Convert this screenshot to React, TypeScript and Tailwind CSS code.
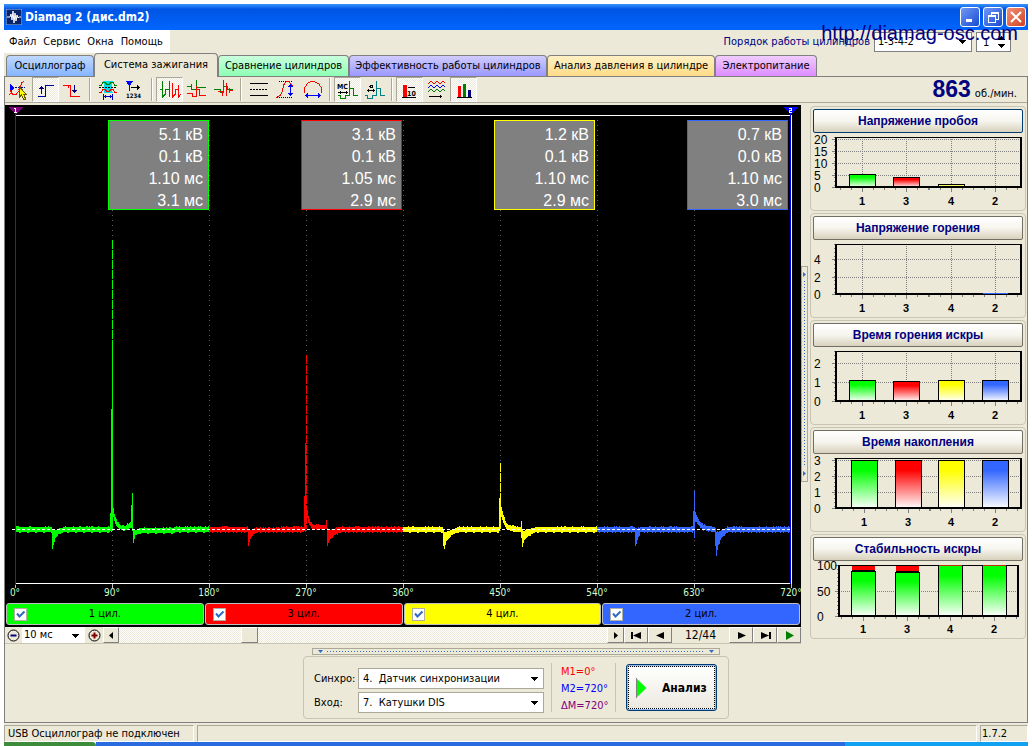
import React, { useState } from 'react';
import clsx from 'clsx';

type Column = [x: number, top: number, bottom: number];

interface Channel {
  id: number;
  from: number;
  to: number;
  color: string;
  bar: string;
  box: string;
  readout: string[];
  columns: Column[];
}

interface MiniBar {
  x: number;
  y: number;
  w: number;
  fill: string;
}

interface MiniMark extends MiniBar {
  h: number;
}

interface MiniChartData {
  title: string;
  active?: boolean;
  left: number;
  right: number;
  top: number;
  bottom: number;
  centers: number[];
  ticks: [label: string, y: number][];
  bars: MiniBar[];
  marks?: MiniMark[];
}

const ZERO = 424;

// Columns are scope pixels: x, highest point, lowest point
const channels: Channel[] = [
  {
    id: 1,
    from: 11,
    to: 204,
    color: '#00ff00',
    bar: 'bg-[#00ff00]',
    box: 'border-[#00ff00]',
    readout: ['5.1 кВ', '0.1 кВ', '1.10 мс', '3.1 мс'],
    columns: [
      [46, 422, 427], [47, 424, 443], [48, 425, 440], [50, 425, 433], [54, 423, 428], [60, 422, 427],
      [104, 422, 427], [105, 408, 426], [106, 304, 427], [107, 240, 426], [108, 403, 412], [109, 410, 416],
      [112, 417, 422], [116, 421, 425], [120, 421, 425], [125, 417, 423], [126, 400, 422], [127, 389, 425],
      [128, 424, 438], [130, 425, 430], [134, 423, 428],
    ],
  },
  {
    id: 3,
    from: 204,
    to: 398,
    color: '#ff0000',
    bar: 'bg-[#ff0000]',
    box: 'border-[#ff0000]',
    readout: ['3.1 кВ', '0.1 кВ', '1.05 мс', '2.9 мс'],
    columns: [
      [242, 422, 427], [243, 424, 441], [244, 425, 436], [247, 425, 430], [252, 423, 427],
      [298, 422, 427], [299, 392, 426], [300, 339, 426], [301, 406, 413], [302, 406, 413], [304, 415, 420],
      [307, 420, 424], [310, 420, 424], [320, 420, 424], [321, 415, 424], [322, 424, 441], [324, 425, 435],
      [328, 424, 431], [335, 422, 427],
    ],
  },
  {
    id: 4,
    from: 398,
    to: 592,
    color: '#ffff00',
    bar: 'bg-[#ffff00]',
    box: 'border-[#ffff00]',
    readout: ['1.2 кВ', '0.1 кВ', '1.10 мс', '2.9 мс'],
    columns: [
      [437, 422, 427], [438, 424, 441], [439, 427, 444], [441, 427, 436], [446, 425, 430], [452, 422, 427],
      [493, 422, 427], [494, 393, 426], [495, 393, 420], [496, 403, 412], [498, 411, 418], [501, 418, 423],
      [505, 421, 426], [515, 422, 427], [516, 417, 432], [517, 425, 441], [519, 426, 435], [524, 424, 430],
      [531, 422, 427],
    ],
  },
  {
    id: 2,
    from: 592,
    to: 785,
    color: '#3366ff',
    bar: 'bg-[#3366ff]',
    box: 'border-[#3366ff]',
    readout: ['0.7 кВ', '0.0 кВ', '1.10 мс', '3.0 мс'],
    columns: [
      [629, 422, 427], [630, 424, 441], [632, 424, 435], [635, 422, 427],
      [687, 422, 427], [688, 407, 426], [689, 407, 433], [690, 408, 416], [693, 415, 420], [698, 420, 425],
      [709, 422, 427], [710, 424, 441], [711, 427, 450], [713, 427, 440], [716, 425, 433], [722, 422, 427],
    ],
  },
];

const spikes = [
  { x: 107, y: 135, color: '#00ff00' },
  { x: 301, y: 250, color: '#ff0000' },
  { x: 495, y: 358, color: '#ffff00' },
  { x: 689, y: 386, color: '#3366ff' },
];

const degrees = [0, 90, 180, 270, 360, 450, 540, 630, 720];

const miniCharts: MiniChartData[] = [
  {
    title: 'Напряжение пробоя',
    active: true,
    left: 25, right: 210, top: 4, bottom: 54,
    centers: [51, 95, 140, 184],
    ticks: [['20', 6], ['15', 18], ['10', 30], ['5', 42], ['0', 54]],
    bars: [
      { x: 38, y: 41, w: 26, fill: 'green' },
      { x: 82, y: 44, w: 26, fill: 'red' },
      { x: 127, y: 51, w: 26, fill: 'yellow' },
    ],
    marks: [{ x: 128, y: 52, w: 25, h: 1, fill: '#ffff66' }],
  },
  {
    title: 'Напряжение горения',
    left: 25, right: 210, top: 4, bottom: 54,
    centers: [51, 95, 140, 184],
    ticks: [['4', 19], ['2', 37], ['0', 54]],
    bars: [],
    marks: [{ x: 172, y: 53, w: 25, h: 1, fill: '#3366ff' }],
  },
  {
    title: 'Время горения искры',
    left: 25, right: 210, top: 4, bottom: 54,
    centers: [51, 95, 140, 184],
    ticks: [['2', 16], ['1', 35], ['0', 54]],
    bars: [
      { x: 38, y: 33, w: 26, fill: 'green' },
      { x: 82, y: 34, w: 26, fill: 'red' },
      { x: 127, y: 33, w: 26, fill: 'yellow' },
      { x: 171, y: 33, w: 26, fill: 'blue' },
    ],
  },
  {
    title: 'Время накопления',
    left: 25, right: 210, top: 4, bottom: 54,
    centers: [53, 97, 140, 184],
    ticks: [['3', 6], ['2', 22], ['1', 38], ['0', 54]],
    bars: [
      { x: 40, y: 6, w: 26, fill: 'green' },
      { x: 84, y: 6, w: 26, fill: 'red' },
      { x: 127, y: 6, w: 26, fill: 'yellow' },
      { x: 171, y: 6, w: 26, fill: 'blue' },
    ],
  },
  {
    title: 'Стабильность искры',
    left: 28, right: 207, top: 4, bottom: 55,
    centers: [52, 96, 139, 183],
    ticks: [['100', 4], ['50', 30], ['0', 55]],
    bars: [
      { x: 40, y: 10, w: 24, fill: 'green' },
      { x: 84, y: 11, w: 24, fill: 'green' },
      { x: 127, y: 4, w: 24, fill: 'green' },
      { x: 171, y: 4, w: 24, fill: 'green' },
    ],
    marks: [
      { x: 41, y: 5, w: 23, h: 4, fill: '#ff0000' },
      { x: 41, y: 9, w: 23, h: 2, fill: '#000' },
      { x: 85, y: 5, w: 23, h: 5, fill: '#ff0000' },
      { x: 85, y: 10, w: 23, h: 2, fill: '#000' },
      { x: 128, y: 4, w: 23, h: 1, fill: '#c03000' },
      { x: 172, y: 4, w: 23, h: 1, fill: '#c03000' },
    ],
  },
];

const tabs = [
  { label: 'Осциллограф', style: 'w-[88px] from-[#c0d8ff] to-[#86b4ff]' },
  { label: 'Система зажигания', style: 'w-[124px]' },
  { label: 'Сравнение цилиндров', style: 'w-[131px] from-[#c8ffdc] to-[#8cffb4]' },
  { label: 'Эффективность работы цилиндров', style: 'w-[198px] from-[#d0ccff] to-[#9c98ff]' },
  { label: 'Анализ давления в цилиндре', style: 'w-[168px] from-[#fff0c4] to-[#ffdc86]' },
  { label: 'Электропитание', style: 'w-[102px] from-[#f0ccff] to-[#dc8cff]' },
];

function tracePath(channel: Channel): string {
  const cols: Column[] = [[channel.from, 422, 427], ...channel.columns, [channel.to, 422, 427]];
  let seed = channel.id * 97;
  let d = '';
  let k = 0;
  for (let x = channel.from; x < channel.to; x++) {
    while (k < cols.length - 2 && cols[k + 1][0] <= x) k++;
    const [x0, t0, b0] = cols[k];
    const [x1, t1, b1] = cols[k + 1];
    const f = (x - x0) / (x1 - x0);
    seed = (seed * 1103 + 12345) % 65536;
    const up = seed % 5 === 0 ? 1 : 0;
    const down = (seed >> 4) % 4 === 0 ? 1 : 0;
    d += `M${x + 0.5} ${Math.round(t0 + (t1 - t0) * f) - up}V${Math.round(b0 + (b1 - b0) * f) + down}`;
  }
  return d;
}

function Scope() {
  return (
    <div className="relative flex-1 min-h-[400px] bg-black">
      <svg
        className="block w-full h-full absolute inset-0"
        viewBox="0 0 796 497"
        preserveAspectRatio="none"
        shapeRendering="crispEdges"
        role="img"
        aria-label="Осциллограмма зажигания"
      >
        {degrees.slice(1, 8).map((deg, i) => (
          <path
            key={deg}
            d={`M${Math.round(10.5 + (i + 1) * 96.97)}.5 15V478`}
            stroke="#606060"
            strokeDasharray="1 4"
          />
        ))}
        <path d="M11 10.5H786M11 478.5H787" stroke="#fff" />
        {degrees.map((deg, i) => (
          <path key={deg} d={`M${Math.round(10 + i * 97)}.5 479V483`} stroke="#c0c0c0" />
        ))}
        {channels.map((ch) => (
          <path key={ch.id} d={tracePath(ch)} stroke={ch.color} />
        ))}
        {spikes.map((s) => (
          <path key={s.x} d={`M${s.x}.5 ${s.y}V${ZERO}`} stroke={s.color} strokeDasharray="9 1" />
        ))}
        <path d="M7 424.5H786" stroke="#fff" strokeDasharray="3 2" />
        <path d="M10.5 8V480" stroke="#800080" />
        <path d="M3 2H18L11 9H10Z" fill="#800080" />
        <path d="M785.5 8V479" stroke="#0000ff" />
        <path d="M786.5 10V479" stroke="#fff" />
        <path d="M778 2H793L786 9H785Z" fill="#0000ff" />
        <path d="M9 3.5H11M10.5 3V7M9 7.5H12M784 3.5H787M786.5 3V5M787 5.5H784M784.5 5V8M784 7.5H787" stroke="#fff" fill="none" />
        {degrees.map((deg, i) => (
          <text
            key={deg}
            x={10 + i * 97}
            y={491}
            fill="#ccffcc"
            textAnchor="middle"
            className="text-[10px]"
          >
            {deg}°
          </text>
        ))}
      </svg>
      <div className="relative grid grid-cols-4 pl-[11px] pr-[13px] pt-[15px]">
        {channels.map((ch) => (
          <div key={ch.id} className="flex justify-end">
            <div
              className={clsx(
                'w-[101px] h-[90px] pr-[5px] pt-[3px] bg-[#808080] border text-right text-white font-[Liberation_Sans,sans-serif] text-[16px] leading-[22px]',
                ch.box,
              )}
            >
              {ch.readout.map((line, i) => (
                <p key={i}>{line}</p>
              ))}
            </div>
          </div>
        ))}
      </div>
    </div>
  );
}

function ChannelBar() {
  const [enabled, setEnabled] = useState<Record<number, boolean>>({ 1: true, 2: true, 3: true, 4: true });

  return (
    <div className="grid grid-cols-4 gap-px px-px pt-px pb-[2px] bg-black">
      {channels.map((ch) => (
        <label
          key={ch.id}
          className={clsx('relative flex items-center justify-center h-[22px] rounded-[3px] border border-[#c0c0c0]', ch.bar)}
        >
          <input
            type="checkbox"
            checked={enabled[ch.id]}
            onChange={(e) => setEnabled({ ...enabled, [ch.id]: e.target.checked })}
            className="peer appearance-none absolute left-[7px] size-[13px] bg-white border border-[#b0b0a0]"
          />
          <svg
            className="absolute left-[7px] size-[13px] hidden peer-checked:block pointer-events-none"
            viewBox="0 0 13 13"
            fill="none"
            stroke="#3169c6"
            strokeWidth="2"
          >
            <path d="M3 5.5L5.5 8.5L10.5 3.5" />
          </svg>
          {ch.id} цил.
        </label>
      ))}
    </div>
  );
}

const raised = 'border border-t-white border-l-white border-r-[#808080] border-b-[#808080] bg-[#ece9d8]';

function StepButton({ label, path, color = '#000' }: { label: string; path: string; color?: string }) {
  return (
    <button aria-label={label} className={clsx('w-6 h-4 flex items-center justify-center', raised)}>
      <svg width="15" height="9" viewBox="0 0 15 9" fill={color}>
        <path d={path} />
      </svg>
    </button>
  );
}

function ScrollRow() {
  return (
    <div className="flex h-[17px] items-stretch border-b border-[#c8c5b4]">
      <button aria-label="Уменьшить" className="w-[17px] flex items-center justify-center">
        <svg width="13" height="13" viewBox="0 0 13 13" fill="none" stroke="#000">
          <circle cx="6.5" cy="6.5" r="5.5" />
          <path d="M3.5 6.5H9.5" stroke="#000080" strokeWidth="2" />
        </svg>
      </button>
      <div className="relative w-[63px]">
        <select aria-label="Развёртка" className="appearance-none w-full h-4 bg-white pl-[2px] leading-4">
          <option>10 мс</option>
        </select>
        <Arrow className="right-[6px] top-[7px]" />
      </div>
      <button aria-label="Увеличить" className="w-[18px] flex items-center justify-center">
        <svg width="13" height="13" viewBox="0 0 13 13" fill="none" stroke="#000">
          <circle cx="6.5" cy="6.5" r="5.5" />
          <path d="M3.5 6.5H9.5M6.5 3.5V9.5" stroke="#800000" strokeWidth="2" />
        </svg>
      </button>
      <button aria-label="Влево" className={clsx('w-[16px] h-4 flex items-center justify-center', raised)}>
        <svg width="4" height="7" viewBox="0 0 4 7"><path d="M4 0V7L0 3.5Z" /></svg>
      </button>
      <div className="flex-1 h-4 bg-[conic-gradient(#fff_25%,#ece9d8_0_50%,#fff_0_75%,#ece9d8_0)] bg-[size:2px_2px]">
        <div className={clsx('h-full w-[17px] ml-[25%]', raised)} />
      </div>
      <button aria-label="Вправо" className={clsx('w-[17px] h-4 flex items-center justify-center', raised)}>
        <svg width="4" height="7" viewBox="0 0 4 7"><path d="M0 0V7L4 3.5Z" /></svg>
      </button>
      <StepButton label="В начало" path="M2 1H4V8H2ZM12 1V8L4 4.5Z" />
      <StepButton label="Назад" path="M11 1V8L3 4.5Z" />
      <span className="w-[57px] text-center text-[12px] leading-[17px]">12/44</span>
      <StepButton label="Вперёд" path="M4 1V8L12 4.5Z" />
      <StepButton label="В конец" path="M3 1V8L11 4.5ZM11 1H13V8H11Z" />
      <StepButton label="Воспроизвести" path="M4 0V9L12 4.5Z" color="#008000" />
    </div>
  );
}

function Arrow({ className }: { className?: string }) {
  return (
    <svg
      className={clsx('absolute pointer-events-none', className)}
      width="7"
      height="4"
      viewBox="0 0 7 4"
      shapeRendering="crispEdges"
    >
      <path d="M0 0H7L4 4H3Z" />
    </svg>
  );
}

function MiniChart({ data }: { data: MiniChartData }) {
  const { left, right, top, bottom, centers } = data;
  return (
    <section className="h-[105px] border border-[#c8c5b4] rounded-[4px] pt-[2px]">
      <button
        className={clsx(
          'block mx-auto w-[calc(100%-4px)] h-6 rounded-[2px] border bg-linear-to-b from-white via-[#f6f5ee] to-[#d8d2bd] font-[Liberation_Sans,sans-serif] text-[12px] leading-5 font-bold text-[#000080]',
          data.active ? 'border-[#003c74]' : 'border-[#716f64]',
        )}
      >
        {data.title}
      </button>
      <svg
        className="block w-full h-[76px] overflow-visible font-[Liberation_Sans,sans-serif]"
        viewBox="0 0 214 76"
        shapeRendering="crispEdges"
      >
        <defs>
          <linearGradient id="green" x2="0" y2="1"><stop stopColor="#00ff00" /><stop offset="0.2" stopColor="#00ff00" /><stop offset="1" stopColor="#fff" /></linearGradient>
          <linearGradient id="red" x2="0" y2="1"><stop stopColor="#ff0000" /><stop offset="0.2" stopColor="#ff0000" /><stop offset="1" stopColor="#fff" /></linearGradient>
          <linearGradient id="yellow" x2="0" y2="1"><stop stopColor="#ffff00" /><stop offset="0.2" stopColor="#ffff00" /><stop offset="1" stopColor="#fff" /></linearGradient>
          <linearGradient id="blue" x2="0" y2="1"><stop stopColor="#3366ff" /><stop offset="0.2" stopColor="#3366ff" /><stop offset="1" stopColor="#fff" /></linearGradient>
        </defs>
        {data.ticks.map(([label, y]) => (
          <g key={label}>
            <path d={`M${left} ${y}.5H${right}`} stroke="#808080" strokeDasharray="1 1" />
            <path d={`M${left - 4} ${y}.5H${left}`} stroke="#808080" />
            <text x={left === 28 ? 6 : 3} y={y + 5} className="text-[12px]">
              {label}
            </text>
          </g>
        ))}
        <path d={`M${left - 2}.5 ${top}V${bottom}`} stroke="#808080" strokeDasharray="1 3" />
        {centers.map((x) => (
          <g key={x}>
            <path d={`M${x}.5 ${top}V${bottom}`} stroke="#808080" strokeDasharray="1 1" />
            <path
              d={`M${x}.5 ${bottom + 1}V${bottom + 5}M${x - 22}.5 ${bottom + 1}V${bottom + 3}M${x - 11}.5 ${bottom + 1}V${bottom + 3}M${x + 11}.5 ${bottom + 1}V${bottom + 3}M${x + 22}.5 ${bottom + 1}V${bottom + 3}`}
              stroke="#808080"
            />
          </g>
        ))}
        <path d={`M${left} ${top}.5H${right}`} stroke="#000" />
        {data.bars.map((b) => (
          <rect key={b.x} x={b.x + 0.5} y={b.y + 0.5} width={b.w} height={bottom - b.y} fill={`url(#${b.fill})`} stroke="#000" />
        ))}
        <path d={`M${left} ${top}V${bottom}H${right}V${top}`} stroke="#000" strokeWidth="2" fill="none" />
        {data.marks?.map((m) => (
          <rect key={`${m.x}-${m.y}`} x={m.x} y={m.y} width={m.w} height={m.h} fill={m.fill} />
        ))}
        {centers.map((x, i) => (
          <text key={x} x={x} y={72} textAnchor="middle" className="text-[11px] font-bold">
            {channels[i].id}
          </text>
        ))}
      </svg>
    </section>
  );
}

interface ToolProps {
  label: string;
  pressed?: boolean;
  children: React.ReactNode;
}

function Tool({ label, pressed, children }: ToolProps) {
  return (
    <button
      aria-label={label}
      className={clsx(
        'w-[27px] h-[25px] border',
        pressed
          ? 'border-t-[#aca899] border-l-[#aca899] border-r-white border-b-white bg-[conic-gradient(#fff_25%,#ece9d8_0_50%,#fff_0_75%,#ece9d8_0)] bg-[size:2px_2px]'
          : 'border-transparent',
      )}
    >
      <svg className="block" width="25" height="23" viewBox="0 0 25 23" fill="none" shapeRendering="crispEdges">
        {children}
      </svg>
    </button>
  );
}

function Separator() {
  return <span className="mx-[3px] h-[23px] w-[2px] border-l border-[#aca899] bg-white" />;
}

function Toolbar() {
  return (
    <div className="flex items-center h-[26px] border-b border-[#aca899]">
      <Tool label="Маркер">
        <path d="M4 6V14L9 10Z" fill="#0000ff" />
        <path d="M9 9.500H19" stroke="#0000a0" strokeDasharray="2 1" />
        <path d="M18 3.500L15.500 5L14.500 9L12.500 12M4 12L7 16.500H10L12.500 13M3 17L6 14.500" stroke="#ff0000" />
        <path d="M13.500 9V19L15.500 17L17.500 21H19.500L18 16.500H20.500Z" fill="#ffff00" stroke="#605800" />
      </Tool>
      <Tool label="Фронт" pressed>
        <path d="M5 18.500H12.500V7.500H21" stroke="#0000a0" />
        <path d="M8.500 8V16M6 10.500H11M7 9.500H10" stroke="#000080" />
      </Tool>
      <Tool label="Спад">
        <path d="M3 7.500H8.500V8M8.500 7V10M10.500 7V18.500H20" stroke="#ff0000" />
        <path d="M3 7.500H11" stroke="#ff0000" />
        <path d="M14.500 7V15M12 12.500H17M13 13.500H16" stroke="#000080" />
      </Tool>
      <Separator />
      <Tool label="Коррекция">
        <path d="M8 3H18L17 6V14L18 15H8L9 14V6Z" fill="#00e0e8" />
        <path d="M4 7.500H6L8 4.500H10L12 6.500H14L16 4.500H18L20 7.500H22" stroke="#008000" />
        <path d="M4 14.500H6L8 11.500H10L12 13.500H14L16 11.500H18L20 14.500H22" stroke="#ff0000" />
        <path d="M4 9.500H22" stroke="#000" strokeDasharray="2 1" />
        <path d="M8.500 16V22M17.500 16V22M9 18.500H17M10.500 17V20M15.500 17V20" stroke="#0000c0" />
      </Tool>
      <Tool label="Нумерация">
        <path d="M4 3H11L8 8H7Z" fill="#0000ff" />
        <path d="M7.500 8V13" stroke="#0000ff" />
        <path d="M9 9.500H18M15.500 7V12M16.500 8V11" stroke="#000" />
        <text x="4" y="20" fill="#000" className="text-[6px] font-bold">1234</text>
      </Tool>
      <Separator />
      <Tool label="Последовательно" pressed>
        <path d="M3 11.500H5M5.500 3V19.500L8 16.500V11.500H12.500M12.500 3V19" stroke="#008000" />
        <path d="M15.500 5V19.500L18 16.500V11.500H21.500M21.500 7V19L23.500 16.500" stroke="#ff0000" />
      </Tool>
      <Tool label="Растр">
        <path d="M3 8.500H7V6.500M7.500 6V11.500H12.500V2M13 9.500H22" stroke="#008000" />
        <path d="M3 15.500H8V18.500H12.500V8M13 11.500H15.500V17.500H22" stroke="#ff0000" />
      </Tool>
      <Tool label="Наложение">
        <path d="M3 11.500H9V14.500H12.500V2M13 8.500H16V11.500H22" stroke="#008000" />
        <path d="M7 13.500H11V17.500M15.500 5V18M18.500 10V15M19 12.500H22" stroke="#ff0000" />
      </Tool>
      <Separator />
      <Tool label="Линии">
        <path d="M4 5.500H22M4 17.500H22" stroke="#000" />
        <path d="M4 11.500H22" stroke="#000" strokeDasharray="2 1" />
      </Tool>
      <Tool label="Амплитуда">
        <path d="M6 3.500H19M4 19.500H20" stroke="#000" strokeDasharray="1 1" />
        <path d="M3 19.500L7 17.500L9.500 13L10.500 7L13.500 3.500H16L19.500 8" stroke="#ff0000" />
        <path d="M17.500 6V18M15 8.500H20M16 7.500H19M15 15.500H20M16 16.500H19" stroke="#0000ff" />
      </Tool>
      <Tool label="Период">
        <path d="M4.500 15V10L7.500 5.500L11 3.500H14L18.500 5.500L21.500 10V15" stroke="#ff0000" />
        <path d="M5 17.500H21M7.500 15V20M18.500 15V20M6.500 16V19M19.500 16V19" stroke="#0000ff" />
      </Tool>
      <Separator />
      <Tool label="Время, мс" pressed>
        <text x="2" y="11" fill="#000" className="text-[7px] font-bold">МС</text>
        <path d="M3 14.500H13M5.500 13V16M11.500 13V16" stroke="#000" />
        <path d="M3 17.500H5V20.500H10.500V17.500H14.500V3M15 10.500H18.500V17.500H23" stroke="#008000" />
      </Tool>
      <Tool label="Градусы">
        <circle cx="9.500" cy="8.500" r="1.500" stroke="#000" />
        <path d="M5 12.500H13M6.500 11V14M11.500 11V14" stroke="#000" />
        <path d="M3 17.500H5V20.500H10.500V17.500H14.500V3M15 10.500H18.500V17.500H23" stroke="#008080" />
      </Tool>
      <Separator />
      <Tool label="Масштаб 10" pressed>
        <path d="M6 7H10V19H6Z" fill="#ff0000" />
        <path d="M11 9.500H18M5 19.500H19" stroke="#000" />
        <text x="10" y="18" fill="#000" className="text-[7px] font-bold">10</text>
      </Tool>
      <Tool label="Наложить кадры">
        <path d="M4 6L7 3L10 6L13 3L16 6L19 3L21 5" stroke="#ff0000" />
        <path d="M4 10L7 7L10 10L13 7L16 10L19 7L21 9" stroke="#0000ff" />
        <path d="M4 14L7 11L10 14L13 11L16 14L19 11L21 13" stroke="#008000" />
        <path d="M5 18.500H18M16.500 17V20" stroke="#000" />
      </Tool>
      <Tool label="Диаграммы" pressed>
        <path d="M7 8H10V19H7Z" fill="#ff0000" />
        <path d="M12 6H15V19H12Z" fill="#008000" />
        <path d="M17 12H20V19H17Z" fill="#000080" />
        <path d="M6 19.500H21" stroke="#000" />
      </Tool>
      <p className="ml-auto mr-[10px] flex items-baseline gap-1">
        <b className="font-[Liberation_Sans,sans-serif] text-[23px] leading-6 text-[#000080]">863</b>
        <span>об./мин.</span>
      </p>
    </div>
  );
}

function TitleBar() {
  const control = 'size-5 rounded-[3px] border border-white flex items-center justify-center bg-linear-to-br';
  return (
    <header className="flex items-center h-[26px] px-[2px] gap-[3px] bg-linear-to-b from-[#3a93ff] from-0% via-[#0054e3] via-20% to-[#0066ff]">
      <svg width="16" height="16" viewBox="0 0 16 16" fill="none">
        <path d="M0 0H16V16H0Z" fill="#0a246a" stroke="#9cc0ff" />
        <path d="M1 8H4L5 5L6 11L7 2L8 14L9 4L10 12L11 6L12 9L13 8H15" stroke="#fff" />
      </svg>
      <h1 className="flex-1 font-[DejaVu_Sans_Condensed,DejaVu_Sans,sans-serif] text-[12px] font-bold text-white">Diamag 2 (дис.dm2)</h1>
      <div className="flex gap-[3px]">
        <button aria-label="Свернуть" className={clsx(control, 'from-[#7098f8] to-[#1848d0]')}>
          <svg width="14" height="14" viewBox="0 0 14 14" fill="#fff"><path d="M3 9H9V12H3Z" /></svg>
        </button>
        <button aria-label="Восстановить" className={clsx(control, 'from-[#7098f8] to-[#1848d0]')}>
          <svg width="14" height="14" viewBox="0 0 14 14" fill="none" stroke="#fff" shapeRendering="crispEdges">
            <path d="M2.500 5.500H9.500V12.500H2.500ZM2 6.500H10M5.500 5V2.500H12.500V9.500H10M5 3.500H12" />
          </svg>
        </button>
        <button aria-label="Закрыть" className={clsx(control, 'from-[#f09078] to-[#d04018]')}>
          <svg width="14" height="14" viewBox="0 0 14 14" stroke="#fff" strokeWidth="2"><path d="M2 2L12 12M12 2L2 12" /></svg>
        </button>
      </div>
    </header>
  );
}

function Field({ label, id, value }: { label: string; id: string; value: string }) {
  return (
    <div className="flex items-center">
      <label htmlFor={id} className="w-[44px]">{label}</label>
      <div className="relative w-[186px]">
        <select id={id} className="appearance-none w-full h-[21px] bg-white border border-[#aca899] pl-[4px]">
          <option>{value}</option>
        </select>
        <Arrow className="right-[6px] top-[9px]" />
      </div>
    </div>
  );
}

export default function App() {
  const [activeTab, setActiveTab] = useState(1);

  return (
    <div className="h-screen min-h-[700px] flex flex-col bg-white pt-1 px-1 font-[DejaVu_Sans_Condensed,DejaVu_Sans,sans-serif] text-[11px] leading-4 text-black">
      <div className="relative flex-1 min-h-0 flex flex-col bg-[#ece9d8]">
        <TitleBar />
        <p className="absolute z-10 right-[10px] top-[17px] font-[Liberation_Sans,sans-serif] text-[20px] leading-6 text-[#000080] pointer-events-none">
          http://diamag-osc.com
        </p>

        <div className="flex items-center h-6">
          <nav className="flex gap-[7px] h-[23px] self-start items-center bg-white pl-[5px] pr-[7px]">
            {['Файл', 'Сервис', 'Окна', 'Помощь'].map((item) => (
              <button key={item}>{item}</button>
            ))}
          </nav>
          <div className="ml-auto mr-[17px] flex items-center gap-1">
            <label htmlFor="order" className="text-[#000080]">Порядок работы цилиндров</label>
            <div className="relative w-[98px]">
              <select id="order" className="appearance-none block w-full h-5 bg-white border border-[#808080] pl-[3px]">
                <option>1-3-4-2</option>
              </select>
              <Arrow className="right-[6px] top-2" />
            </div>
            <div className="relative w-[35px]">
              <input aria-label="Цилиндр" defaultValue="1" className="block w-full h-5 bg-white border border-[#808080] pl-[6px]" />
              <Arrow className="right-[6px] top-3" />
              <Arrow className="right-[6px] top-1 rotate-180" />
            </div>
          </div>
        </div>

        <div role="tablist" className="flex items-end h-[23px] pl-[2px] border-b border-[#808080]">
          {tabs.map((tab, i) => (
            <button
              key={tab.label}
              role="tab"
              aria-selected={i === activeTab}
              onClick={() => setActiveTab(i)}
              className={clsx(
                'border border-b-0 border-[#808080] rounded-t-[4px] whitespace-nowrap',
                tab.style,
                i === activeTab ? 'h-[24px] -mb-px bg-[#ece9d8] pb-[2px]' : 'h-[21px] bg-linear-to-b',
              )}
            >
              {tab.label}
            </button>
          ))}
        </div>

        <main className="flex-1 min-h-0 flex flex-col border-x border-b border-[#808080]">
          <Toolbar />
          <div className="flex-1 flex min-h-0 pt-[2px]">
            <div className="flex-1 flex flex-col">
              <Scope />
              <ChannelBar />
              <ScrollRow />
            </div>
            <div className="w-[226px] flex">
              <div className="w-[7px] h-[216px] mt-[161px] border border-[#aca899] flex flex-col items-center py-[5px]">
                <svg width="3" height="5" viewBox="0 0 3 5" fill="#316ac5"><path d="M0 0V5L3 2.500Z" /></svg>
                <span className="flex-1 my-1 w-px bg-[repeating-linear-gradient(to_bottom,#316ac5_0_1px,transparent_1px_3px)]" />
                <svg width="3" height="5" viewBox="0 0 3 5" fill="#316ac5"><path d="M0 0V5L3 2.500Z" /></svg>
              </div>
              <aside className="flex-1 flex flex-col gap-[2px] pl-[2px] pr-px pt-px">
                {miniCharts.map((chart) => (
                  <MiniChart key={chart.title} data={chart} />
                ))}
              </aside>
            </div>
          </div>

          <div className="flex flex-col items-center pt-1 pb-[3px]">
            <div className="w-[408px] h-[7px] border border-[#aca899] flex items-center px-[5px]">
              <svg width="5" height="3" viewBox="0 0 5 3" fill="#316ac5"><path d="M0 0H5L2.500 3Z" /></svg>
              <span className="flex-1 mx-1 h-px bg-[repeating-linear-gradient(to_right,#316ac5_0_1px,transparent_1px_3px)]" />
              <svg width="5" height="3" viewBox="0 0 5 3" fill="#316ac5"><path d="M0 0H5L2.500 3Z" /></svg>
            </div>
            <div className="mt-px h-[63px] w-[426px] border border-[#c8c5b4] rounded-[4px] flex items-center pl-[10px] pr-[11px]">
              <div className="flex flex-col gap-[3px] pt-[6px]">
                <Field id="sync" label="Синхро:" value={'4.\u00a0 Датчик синхронизации'} />
                <Field id="input" label="Вход:" value={'7.\u00a0 Катушки DIS'} />
              </div>
              <div className="ml-[7px] w-[65px] h-[49px] border-x border-[#c8c5b4] pl-[9px] leading-[17px]">
                <p className="text-[#ff0000]">M1=0°</p>
                <p className="text-[#0000ff]">M2=720°</p>
                <p className="text-[#800080]">ΔM=720°</p>
              </div>
              <button className="ml-auto w-[91px] h-[47px] rounded-[3px] border border-[#003c74] bg-[#98b8ea] p-px">
                <span className="flex items-center h-full border border-dotted border-black bg-linear-to-b from-white to-[#ece9e0] pl-[7px] gap-[15px] text-[12px] font-bold">
                  <svg width="11" height="20" viewBox="0 0 11 20" fill="#00ff00"><path d="M0.500 0.500V19.500L10.500 10Z" /><path d="M0.500 0V20" stroke="#808080" /></svg>
                  Анализ
                </span>
              </button>
            </div>
          </div>
        </main>

        <footer className="flex gap-[3px] h-[19px] pt-[2px]">
          <span className="w-[190px] border border-[#aca899] border-b-white border-r-white pl-[3px] leading-[15px]">USB Осциллограф не подключен</span>
          <span className="flex-1 border border-[#aca899] border-b-white border-r-white" />
          <span className="w-[48px] border border-[#aca899] border-b-white border-r-white pl-px leading-[15px]">1.7.2</span>
        </footer>
      </div>
      <div className="flex h-1">
        <span className="w-[92px] bg-[#3c8c3c] rounded-tr-[4px]" />
        <span className="flex-1 bg-[#2b6be0]" />
        <span className="w-[183px] bg-[#12a0f0]" />
      </div>
    </div>
  );
}
